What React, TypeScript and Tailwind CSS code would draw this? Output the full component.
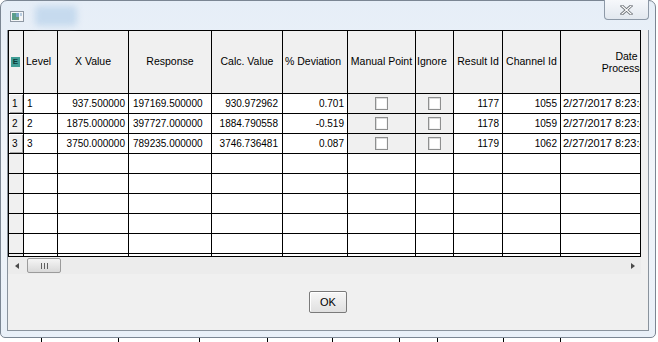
import React from 'react';

const gridCols =
	'grid grid-cols-[15px_34px_71px_83px_71px_65px_68px_38px_49px_58px_132px] w-[684px]';

const rows = [
	{ n: '1', level: '1', x: '937.500000', resp: '197169.500000', calc: '930.972962', dev: '0.701', result: '1177', channel: '1055' },
	{ n: '2', level: '2', x: '1875.000000', resp: '397727.000000', calc: '1884.790558', dev: '-0.519', result: '1178', channel: '1059' },
	{ n: '3', level: '3', x: '3750.000000', resp: '789235.000000', calc: '3746.736481', dev: '0.087', result: '1179', channel: '1062' },
];

const cell = 'border-r border-b border-black flex items-center overflow-hidden whitespace-nowrap';

function CheckBox() {
	return (
		<div className="w-[13px] h-[13px] border border-[#8e8f8f] bg-white shadow-[inset_1px_1px_0_#dcdcdc,inset_-1px_-1px_0_#f4f4f4]" />
	);
}

function AppIcon() {
	return (
		<svg width="14" height="11" viewBox="0 0 14 11">
			<rect x="0.5" y="0.5" width="13" height="10" fill="#f4f6f8" stroke="#8e98a4" />
			<rect x="2" y="2" width="4" height="7" fill="#5a9e8c" />
			<rect x="6" y="2" width="3" height="4" fill="#7aa8c8" />
			<rect x="6" y="6" width="3" height="3" fill="#6c9a78" />
			<rect x="10" y="2" width="2" height="3" fill="#b9cde0" />
		</svg>
	);
}

export default function App() {
	return (
		<div className="w-[658px] h-[342px] bg-white overflow-hidden font-['Liberation_Sans',Arial,sans-serif] text-black">
			{/* Window */}
			<div className="w-[656px] h-[338px] border border-[#7b8693] rounded-t-[7px] rounded-b-[5px] px-[6px] pb-[6px] flex flex-col bg-gradient-to-b from-[#e6eef7] via-[#f1f5fa] to-[#e9f0f8]">
				{/* Title bar */}
				<div className="h-[29px] flex items-center shrink-0">
					<div className="ml-[3px] mt-[2px]">
						<AppIcon />
					</div>
					<div className="ml-[11px] w-[42px] h-[20px] bg-[#c6daee] blur-[3px] rounded" />
					<div className="flex-1" />
					<div className="self-start -mt-px w-[45px] h-[20px] border-x border-b border-[#8d99a7] rounded-b-[4px] bg-gradient-to-b from-[#f6f8fb] to-[#e2e8ef] flex items-center justify-center">
						<svg width="13" height="10" viewBox="0 0 13 10">
							<path d="M2 1 L11 9 M11 1 L2 9" stroke="#6f747a" strokeWidth="3" strokeLinecap="square" />
							<path d="M2 1 L11 9 M11 1 L2 9" stroke="#ffffff" strokeWidth="1.2" strokeLinecap="square" />
						</svg>
					</div>
				</div>

				{/* Client area */}
				<div className="flex-1 flex flex-col border-x border-b border-[#8a939d] bg-[#f0f0f0]">
					{/* Grid viewport */}
					<div className="w-[633px] h-[227px] border border-black overflow-hidden bg-white shrink-0">
						{/* Header */}
						<div className={`${gridCols} h-[63px] text-[10.5px]`}>
							<div className={`${cell} bg-[#f0f0f0] pl-[2px]`}>
								<div className="w-[9px] h-[10px] bg-[#3f9d95] text-[8px] leading-[10px] font-bold text-[#0b3a38] text-center">
									E
								</div>
							</div>
							<div className={`${cell} bg-[#f0f0f0] pl-[2px]`}>Level</div>
							<div className={`${cell} bg-[#f0f0f0] justify-center`}>X Value</div>
							<div className={`${cell} bg-[#f0f0f0] justify-center`}>Response</div>
							<div className={`${cell} bg-[#f0f0f0] justify-center`}>Calc. Value</div>
							<div className={`${cell} bg-[#f0f0f0] pl-[2px]`}>% Deviation</div>
							<div className={`${cell} bg-[#f0f0f0] justify-center`}>Manual Point</div>
							<div className={`${cell} bg-[#f0f0f0] pl-[1px]`}>Ignore</div>
							<div className={`${cell} bg-[#f0f0f0] justify-center`}>Result Id</div>
							<div className={`${cell} bg-[#f0f0f0] justify-center`}>Channel Id</div>
							<div className={`${cell} bg-[#f0f0f0] justify-center`}>
								<div className="text-center leading-[12px]">
									Date
									<br />
									Processed
								</div>
							</div>
						</div>

						{/* Data rows */}
						{rows.map((r) => (
							<div key={r.n} className={`${gridCols} h-[20px] text-[10px]`}>
								<div className={`${cell} bg-[#f0f0f0] pl-[3px] shadow-[inset_1px_1px_0_#ffffff,inset_-1px_-1px_0_#a7a7a7]`}>
									{r.n}
								</div>
								<div className={`${cell} pl-[3px]`}>{r.level}</div>
								<div className={`${cell} justify-end pr-[3px]`}>{r.x}</div>
								<div className={`${cell} pl-[4px]`}>{r.resp}</div>
								<div className={`${cell} justify-end pr-[4px]`}>{r.calc}</div>
								<div className={`${cell} justify-end pr-[3px]`}>{r.dev}</div>
								<div className={`${cell} bg-[#f0f0f0] justify-center`}>
									<CheckBox />
								</div>
								<div className={`${cell} bg-[#f0f0f0] justify-center`}>
									<CheckBox />
								</div>
								<div className={`${cell} justify-end pr-[3px]`}>{r.result}</div>
								<div className={`${cell} justify-end pr-[3px]`}>{r.channel}</div>
								<div className={`${cell} pl-[2px] text-[11px]`}>2/27/2017 8:23:41 PM</div>
							</div>
						))}

						{/* Empty rows */}
						{[4, 5, 6, 7, 8, 9].map((i) => (
							<div key={i} className={`${gridCols} h-[20px]`}>
								<div className={`${cell} bg-[#f0f0f0]`} />
								<div className={cell} />
								<div className={cell} />
								<div className={cell} />
								<div className={cell} />
								<div className={cell} />
								<div className={cell} />
								<div className={cell} />
								<div className={cell} />
								<div className={cell} />
								<div className={cell} />
							</div>
						))}
					</div>

					{/* Horizontal scrollbar */}
					<div className="w-[633px] h-[17px] bg-[#ececec] flex items-center shrink-0">
						<div className="w-[17px] h-full flex items-center justify-center">
							<div className="w-0 h-0 border-y-[3px] border-y-transparent border-r-[4px] border-r-[#4a4a4a]" />
						</div>
						<div className="ml-[2px] w-[34px] h-[15px] rounded-[2px] border border-[#9b9b9b] bg-gradient-to-b from-[#f5f5f5] to-[#d9d9d9] flex items-center justify-center gap-[2px]">
							<div className="w-px h-[6px] bg-[#606060]" />
							<div className="w-px h-[6px] bg-[#606060]" />
							<div className="w-px h-[6px] bg-[#606060]" />
						</div>
						<div className="flex-1" />
						<div className="w-[17px] h-full flex items-center justify-center">
							<div className="w-0 h-0 border-y-[3px] border-y-transparent border-l-[4px] border-l-[#4a4a4a]" />
						</div>
					</div>

					{/* Buttons */}
					<div className="flex-1 flex items-center justify-center">
						<button className="w-[38px] h-[22px] border border-[#7a7a7a] rounded-[2px] bg-gradient-to-b from-[#f7f7f7] to-[#e0e0e0] shadow-[inset_1px_1px_0_#ffffff] text-[11px] leading-none">
							OK
						</button>
					</div>
				</div>
			</div>

			{/* Underlying content peeking below */}
			<div className="h-[4px] flex">
				<div className="ml-[41px] w-px h-full bg-black" />
				<div className="ml-[76px] w-px h-full bg-black" />
				<div className="ml-[80px] w-px h-full bg-black" />
				<div className="ml-[67px] w-px h-full bg-black" />
				<div className="ml-[64px] w-px h-full bg-black" />
				<div className="ml-[66px] w-px h-full bg-black" />
				<div className="ml-[37px] w-px h-full bg-black" />
				<div className="ml-[65px] w-px h-full bg-black" />
				<div className="ml-[56px] w-px h-full bg-black" />
			</div>
		</div>
	);
}
